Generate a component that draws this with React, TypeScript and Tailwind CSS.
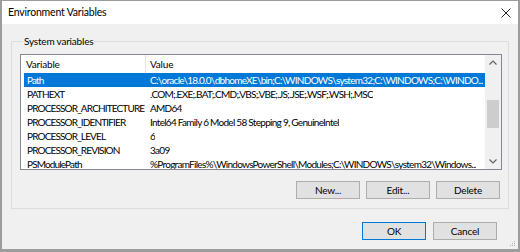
const rows = [
  { name: "Path", value: "C:\\oracle\\18.0.0\\dbhomeXE\\bin;C:\\WINDOWS\\system32;C:\\WINDOWS;C:\\WINDO...", selected: true },
  { name: "PATHEXT", value: ".COM;.EXE;.BAT;.CMD;.VBS;.VBE;.JS;.JSE;.WSF;.WSH;.MSC" },
  { name: "PROCESSOR_ARCHITECTURE", value: "AMD64" },
  { name: "PROCESSOR_IDENTIFIER", value: "Intel64 Family 6 Model 58 Stepping 9, GenuineIntel" },
  { name: "PROCESSOR_LEVEL", value: "6" },
  { name: "PROCESSOR_REVISION", value: "3a09" },
  { name: "PSModulePath", value: "%ProgramFiles%\\WindowsPowerShell\\Modules;C:\\WINDOWS\\system32\\Windows..." },
];

function Button({ label, isDefault }: { label: string; isDefault?: boolean }) {
  return (
    <button
      className={`w-[64px] h-[18px] bg-[#e1e1e1] text-black leading-none border ${
        isDefault ? "border-[#0078d7]" : "border-[#adadad]"
      }`}
    >
      {label}
    </button>
  );
}

export default function App() {
  return (
    <div
      className="w-[520px] h-[252px] bg-[#f0f0f0] border-x-2 border-b-[3px] border-t border-[#9c9c9c] flex flex-col text-[10px] tracking-[-0.2px] text-black relative overflow-hidden"
      style={{ fontFamily: "Lato, 'Noto Sans', sans-serif" }}
    >
      {/* title bar */}
      <div className="h-[23px] bg-white flex items-center justify-between pl-[6px] pr-[6px] shrink-0">
        <span className="text-[10.5px]">Environment Variables</span>
        <svg width="10" height="10" viewBox="0 0 10 10" className="mr-[1px]">
          <path d="M0.5 0.5L9.5 9.5M9.5 0.5L0.5 9.5" stroke="#222" strokeWidth="1" />
        </svg>
      </div>

      {/* group box */}
      <fieldset className="ml-[9px] mt-[10px] w-[498px] min-w-0 border border-[#dcdcdc] pl-[8px] pr-[6px] pt-[6px] pb-[9px] shrink-0">
        <legend className="ml-[3px] px-[1px] leading-[14px]">System variables</legend>

        <div className="h-[116px] border border-[#828790] bg-white flex overflow-hidden">
          <div className="flex-1 min-w-0 flex flex-col overflow-hidden">
            <div className="h-[18px] flex items-center shrink-0">
              <div className="w-[125px] h-full pl-[5px] flex items-center border-r border-[#e5e5e5]">Variable</div>
              <div className="pl-[4px]">Value</div>
            </div>
            {rows.map((r) => (
              <div
                key={r.name}
                className={`h-[14px] shrink-0 flex items-center ml-[3px] whitespace-nowrap ${
                  r.selected ? "bg-[#0078d7] text-white" : ""
                }`}
              >
                <div className="w-[122px] shrink-0 pl-[3px] tracking-[-0.85px]">{r.name}</div>
                <div className="pl-[4px] min-w-0 overflow-hidden tracking-[-0.72px]">{r.value}</div>
              </div>
            ))}
          </div>

          {/* scrollbar */}
          <div className="w-[16px] shrink-0 bg-[#f0f0f0] flex flex-col items-center">
            <div className="h-[15px] flex items-center justify-center">
              <svg width="8" height="5" viewBox="0 0 8 5">
                <path d="M0.5 4.5L4 1L7.5 4.5" stroke="#606060" fill="none" strokeWidth="1.2" />
              </svg>
            </div>
            <div className="flex-1 w-full flex flex-col items-center">
              <div className="mt-[30px] w-[12px] h-[28px] bg-[#cdcdcd]" />
            </div>
            <div className="h-[15px] flex items-center justify-center">
              <svg width="8" height="5" viewBox="0 0 8 5">
                <path d="M0.5 0.5L4 4L7.5 0.5" stroke="#606060" fill="none" strokeWidth="1.2" />
              </svg>
            </div>
          </div>
        </div>

        <div className="mt-[11px] flex justify-end gap-[6px] pr-[2px]">
          <Button label="New..." />
          <Button label="Edit..." />
          <Button label="Delete" />
        </div>
      </fieldset>

      <div className="mt-[13px] flex justify-end gap-[7px] pr-[21px]">
        <Button label="OK" isDefault />
        <Button label="Cancel" />
      </div>

      {/* resize grip */}
      <svg width="6" height="6" viewBox="0 0 6 6" className="absolute right-[2px] bottom-[2px]">
        <rect x="4" y="0" width="1" height="1" fill="#b0b0b0" />
        <rect x="2" y="2" width="1" height="1" fill="#b0b0b0" />
        <rect x="4" y="2" width="1" height="1" fill="#b0b0b0" />
        <rect x="0" y="4" width="1" height="1" fill="#b0b0b0" />
        <rect x="2" y="4" width="1" height="1" fill="#b0b0b0" />
        <rect x="4" y="4" width="1" height="1" fill="#b0b0b0" />
      </svg>
    </div>
  );
}
